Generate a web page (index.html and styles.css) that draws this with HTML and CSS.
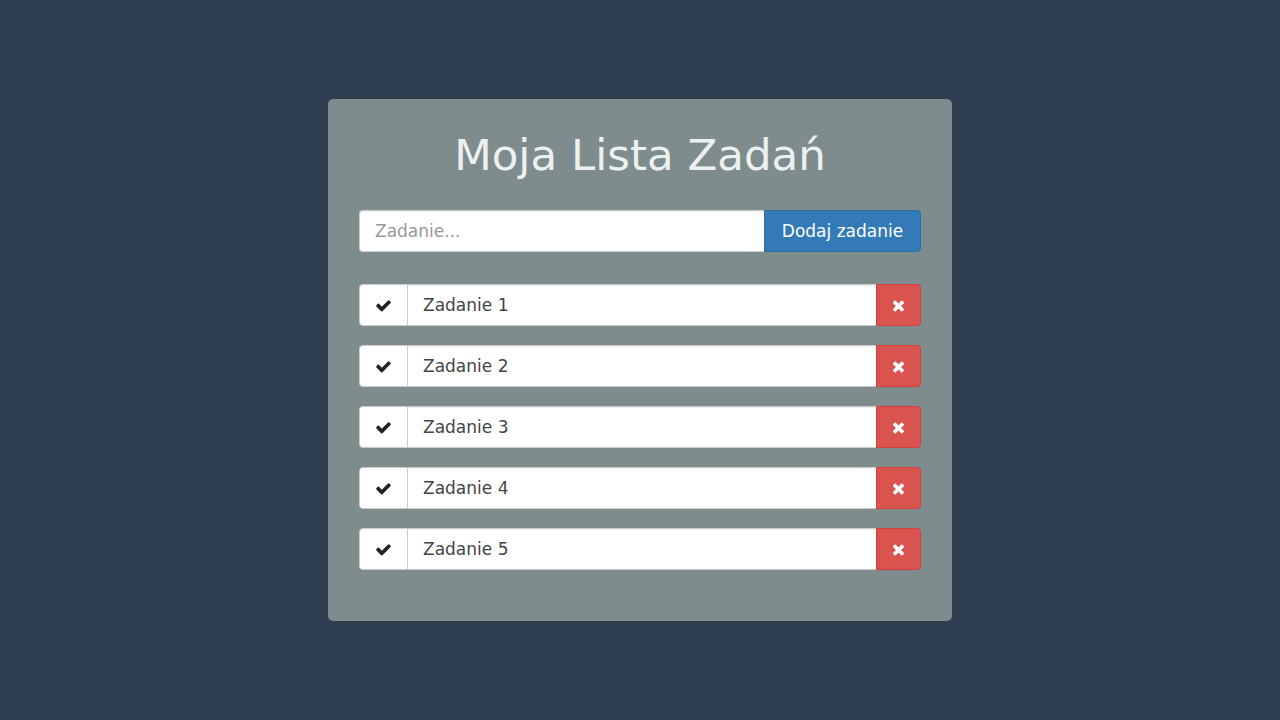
FILE: index.html
```html
<!DOCTYPE html>
<html lang="pl">
<head>
<meta charset="utf-8">
<title>Moja Lista Zadań</title>
<link rel="stylesheet" href="styles.css">
</head>
<body>
<main class="page">
  <section class="card">
    <h1 class="title">Moja Lista Zadań</h1>
    <form class="add-row">
      <input class="add-input" type="text" placeholder="Zadanie...">
      <button class="add-btn" type="button">Dodaj zadanie</button>
    </form>
    <ul class="tasks">
      <li class="task">
        <span class="check"><svg viewBox="0 0 1792 1792" class="ico-check"><path d="M1671 566q0 40-28 68l-724 724-136 136q-28 28-68 28t-68-28l-136-136-362-362q-28-28-28-68t28-68l136-136q28-28 68-28t68 28l294 295 656-657q28-28 68-28t68 28l136 136q28 28 28 68z"/></svg></span>
        <span class="task-text">Zadanie 1</span>
        <button class="del" type="button"><svg viewBox="0 0 1408 1792" class="ico-x"><path d="M1298 1322q0 40-28 68l-136 136q-28 28-68 28t-68-28l-294-294-294 294q-28 28-68 28t-68-28l-136-136q-28-28-28-68t28-68l294-294-294-294q-28-28-28-68t28-68l136-136q28-28 68-28t68 28l294 294 294-294q28-28 68-28t68 28l136 136q28 28 28 68t-28 68l-294 294 294 294q28 28 28 68z"/></svg></button>
      </li>
      <li class="task">
        <span class="check"><svg viewBox="0 0 1792 1792" class="ico-check"><path d="M1671 566q0 40-28 68l-724 724-136 136q-28 28-68 28t-68-28l-136-136-362-362q-28-28-28-68t28-68l136-136q28-28 68-28t68 28l294 295 656-657q28-28 68-28t68 28l136 136q28 28 28 68z"/></svg></span>
        <span class="task-text">Zadanie 2</span>
        <button class="del" type="button"><svg viewBox="0 0 1408 1792" class="ico-x"><path d="M1298 1322q0 40-28 68l-136 136q-28 28-68 28t-68-28l-294-294-294 294q-28 28-68 28t-68-28l-136-136q-28-28-28-68t28-68l294-294-294-294q-28-28-28-68t28-68l136-136q28-28 68-28t68 28l294 294 294-294q28-28 68-28t68 28l136 136q28 28 28 68t-28 68l-294 294 294 294q28 28 28 68z"/></svg></button>
      </li>
      <li class="task">
        <span class="check"><svg viewBox="0 0 1792 1792" class="ico-check"><path d="M1671 566q0 40-28 68l-724 724-136 136q-28 28-68 28t-68-28l-136-136-362-362q-28-28-28-68t28-68l136-136q28-28 68-28t68 28l294 295 656-657q28-28 68-28t68 28l136 136q28 28 28 68z"/></svg></span>
        <span class="task-text">Zadanie 3</span>
        <button class="del" type="button"><svg viewBox="0 0 1408 1792" class="ico-x"><path d="M1298 1322q0 40-28 68l-136 136q-28 28-68 28t-68-28l-294-294-294 294q-28 28-68 28t-68-28l-136-136q-28-28-28-68t28-68l294-294-294-294q-28-28-28-68t28-68l136-136q28-28 68-28t68 28l294 294 294-294q28-28 68-28t68 28l136 136q28 28 28 68t-28 68l-294 294 294 294q28 28 28 68z"/></svg></button>
      </li>
      <li class="task">
        <span class="check"><svg viewBox="0 0 1792 1792" class="ico-check"><path d="M1671 566q0 40-28 68l-724 724-136 136q-28 28-68 28t-68-28l-136-136-362-362q-28-28-28-68t28-68l136-136q28-28 68-28t68 28l294 295 656-657q28-28 68-28t68 28l136 136q28 28 28 68z"/></svg></span>
        <span class="task-text">Zadanie 4</span>
        <button class="del" type="button"><svg viewBox="0 0 1408 1792" class="ico-x"><path d="M1298 1322q0 40-28 68l-136 136q-28 28-68 28t-68-28l-294-294-294 294q-28 28-68 28t-68-28l-136-136q-28-28-28-68t28-68l294-294-294-294q-28-28-28-68t28-68l136-136q28-28 68-28t68 28l294 294 294-294q28-28 68-28t68 28l136 136q28 28 28 68t-28 68l-294 294 294 294q28 28 28 68z"/></svg></button>
      </li>
      <li class="task">
        <span class="check"><svg viewBox="0 0 1792 1792" class="ico-check"><path d="M1671 566q0 40-28 68l-724 724-136 136q-28 28-68 28t-68-28l-136-136-362-362q-28-28-28-68t28-68l136-136q28-28 68-28t68 28l294 295 656-657q28-28 68-28t68 28l136 136q28 28 28 68z"/></svg></span>
        <span class="task-text">Zadanie 5</span>
        <button class="del" type="button"><svg viewBox="0 0 1408 1792" class="ico-x"><path d="M1298 1322q0 40-28 68l-136 136q-28 28-68 28t-68-28l-294-294-294 294q-28 28-68 28t-68-28l-136-136q-28-28-28-68t28-68l294-294-294-294q-28-28-28-68t28-68l136-136q28-28 68-28t68 28l294 294 294-294q28-28 68-28t68 28l136 136q28 28 28 68t-28 68l-294 294 294 294q28 28 28 68z"/></svg></button>
      </li>
    </ul>
  </section>
</main>
</body>
</html>
```

FILE: styles.css
```css
* { box-sizing: border-box; }
html, body { margin: 0; height: 100%; }
body {
  background: #2d3e50;
  font-family: "DejaVu Sans", "Noto Sans", sans-serif;
}
.page {
  display: flex;
  justify-content: center;
  padding-top: 99px;
}
.card {
  width: 624px;
  height: 522px;
  background: #7f8c8d;
  border-radius: 5px;
  padding: 0 31px;
}
.title {
  margin: 0;
  padding-top: 28px;
  height: 111px;
  text-align: center;
  font-weight: 400;
  font-size: 43.5px;
  line-height: 56px;
  color: #ecf0f1;
}
.add-row {
  display: flex;
  height: 42px;
  margin: 0 0 32px;
}
.add-input {
  flex: 1;
  height: 42px;
  border: 1px solid #ccc;
  border-right: 0;
  border-radius: 4px 0 0 4px;
  padding: 0 15px;
  font-family: inherit;
  font-size: 17px;
  color: #555;
  background: #fff;
  box-shadow: inset 0 1px 1px rgba(0,0,0,.075);
  outline: none;
}
.add-input::placeholder { color: #999; }
.add-btn {
  width: 157px;
  height: 42px;
  border: 1px solid #2e6da4;
  border-radius: 0 4px 4px 0;
  background: #337ab7;
  color: #fff;
  font-family: inherit;
  font-size: 17px;
  padding: 0;
}
.tasks {
  list-style: none;
  margin: 0;
  padding: 0;
  display: flex;
  flex-direction: column;
  gap: 19px;
}
.task {
  display: flex;
  height: 42px;
}
.check {
  width: 49px;
  display: flex;
  align-items: center;
  justify-content: center;
  background: #fff;
  border: 1px solid #ccc;
  border-radius: 4px 0 0 4px;
}
.ico-check { width: 17px; height: 17px; fill: #222; }
.task-text {
  flex: 1;
  display: flex;
  align-items: center;
  background: #fff;
  border: 1px solid #ccc;
  border-left: 0;
  border-right: 0;
  padding-left: 15px;
  font-size: 17px;
  color: #444;
  box-shadow: inset 0 1px 1px rgba(0,0,0,.075);
}
.del {
  width: 45px;
  height: 42px;
  padding: 0;
  display: flex;
  align-items: center;
  justify-content: center;
  background: #d9534f;
  border: 1px solid #d43f3a;
  border-radius: 0 4px 4px 0;
}
.ico-x { width: 13px; height: 17px; fill: #fff; }
```
